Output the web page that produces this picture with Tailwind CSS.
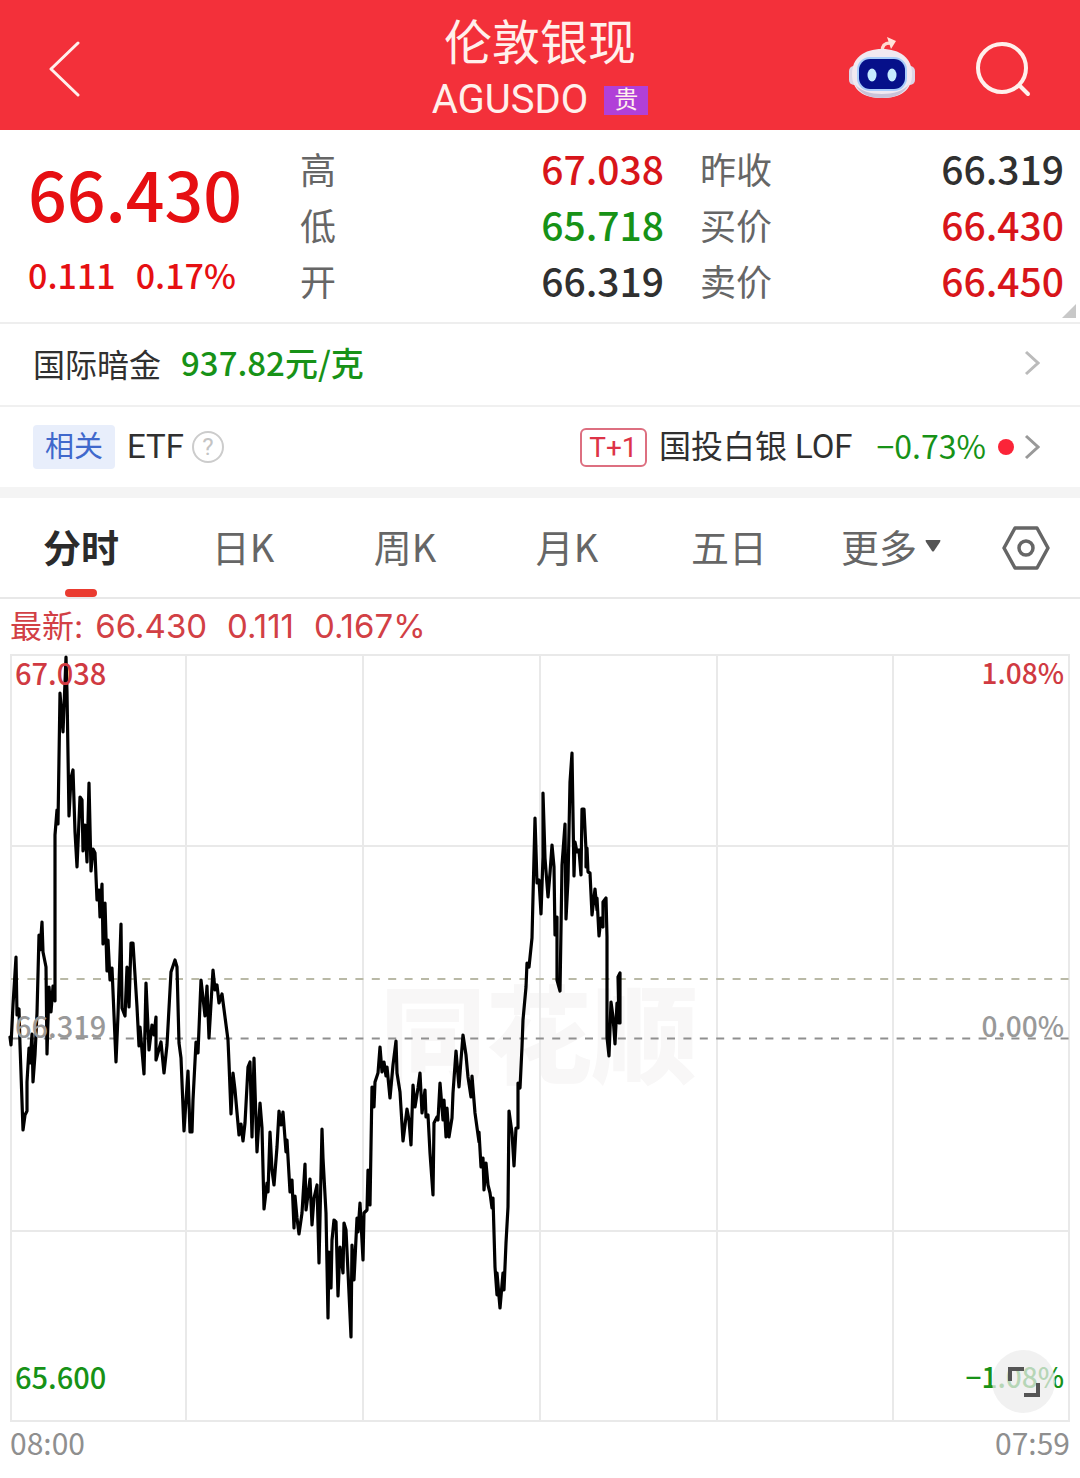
<!DOCTYPE html>
<html lang="zh-CN">
<head>
  <meta charset="UTF-8" />
  <meta name="viewport" content="width=device-width, initial-scale=1.0" />
  <title>伦敦银现 AGUSDO</title>
  <script src="https://cdn.jsdelivr.net/npm/@tailwindcss/browser@4"></script>
</head>

<body class="bg-white text-[#303030] font-['Roboto','Noto_Sans_CJK_SC',sans-serif]">

  <!-- Header -->
  <header class="bg-[#f3303a] text-[#fff0ec] h-[130px] px-12 flex items-center">
    <div class="flex-1 flex">
      <button type="button" aria-label="返回" class="pt-2">
        <svg class="w-8 h-14" viewBox="0 0 32 56" fill="none" stroke="currentColor" stroke-width="3" stroke-linecap="round" stroke-linejoin="round">
          <path d="M30 2 3 28l27 26" />
        </svg>
      </button>
    </div>
    <div class="text-center pt-[14px]">
      <h1 class="text-[48px] leading-[56px]">伦敦银现</h1>
      <div class="flex items-center justify-center gap-4">
        <span class="text-[40px] leading-[56px]">AGUSDO</span>
        <span class="bg-[#b140d8] w-11 h-[29px] text-[24px] leading-[29px]">贵</span>
      </div>
    </div>
    <div class="flex-1 flex justify-end items-center gap-[60px] pt-2">
      <button type="button" aria-label="智能助手">
        <svg class="w-[68px] h-16" viewBox="0 0 68 64" fill="none">
          <path d="M34 15c0-7 3-9 8-9" stroke="#ffd9cf" stroke-width="3.500" />
          <path d="M39 0l9 4-5 8z" fill="#ffe3da" />
          <rect x="1" y="29" width="12" height="19" rx="5" fill="#dcd5e6" />
          <rect x="55" y="29" width="12" height="19" rx="5" fill="#dcd5e6" />
          <path d="M34 12c18 0 30 9 30 25S53 61 34 61 4 53 4 37s12-25 30-25z" fill="#f1e9f1" />
          <path d="M7 47c5 10 14 14 27 14s22-4 27-14c-5 7-16 10-27 10S12 54 7 47z" fill="#c9c3d8" />
          <rect x="9" y="20" width="50" height="34" rx="13" fill="#a9cdfa" />
          <rect x="11" y="22" width="46" height="30" rx="11" fill="#06108a" />
          <ellipse cx="24" cy="38" rx="4.500" ry="6.500" fill="#c5ecff" />
          <ellipse cx="44" cy="38" rx="4.500" ry="6.500" fill="#c5ecff" />
        </svg>
      </button>
      <button type="button" aria-label="搜索">
        <svg class="w-14 h-14" viewBox="0 0 56 56" fill="none" stroke="currentColor" stroke-width="4" stroke-linecap="round">
          <circle cx="26" cy="27" r="24" />
          <path d="M44 45l8 8" />
        </svg>
      </button>
    </div>
  </header>

  <!-- Quote summary -->
  <section class="relative h-[194px] pt-[10px] pl-7 pr-4 flex border-b-2 border-[#eeeeee] font-['Noto_Sans_CJK_SC',sans-serif]">
    <div class="w-[272px] text-[#e60f12] font-medium">
      <p class="text-[68px] leading-[106px]">66.430</p>
      <p class="text-[34px] leading-[58px] flex gap-5"><span>0.111</span><span>0.17%</span></p>
    </div>
    <dl class="w-[364px] grid grid-cols-2 auto-rows-[56px] items-center text-[36px] leading-[56px]">
      <dt class="text-[#666666]">高</dt><dd class="text-right font-medium text-[39px] text-[#d8151a]">67.038</dd>
      <dt class="text-[#666666]">低</dt><dd class="text-right font-medium text-[39px] text-[#179217]">65.718</dd>
      <dt class="text-[#666666]">开</dt><dd class="text-right font-medium text-[39px]">66.319</dd>
    </dl>
    <dl class="flex-1 pl-9 grid grid-cols-2 auto-rows-[56px] items-center text-[36px] leading-[56px]">
      <dt class="text-[#666666]">昨收</dt><dd class="text-right font-medium text-[39px]">66.319</dd>
      <dt class="text-[#666666]">买价</dt><dd class="text-right font-medium text-[39px] text-[#d8151a]">66.430</dd>
      <dt class="text-[#666666]">卖价</dt><dd class="text-right font-medium text-[39px] text-[#d8151a]">66.450</dd>
    </dl>
    <svg class="absolute right-1 bottom-1 w-[14px] h-[14px]" viewBox="0 0 14 14"><path d="M14 0v14H0z" fill="#c8c8c8" /></svg>
  </section>

  <!-- Related instruments -->
  <a href="#gold" class="h-[83px] pl-[33px] pr-10 pb-[3px] flex items-center border-b-2 border-[#f0f0f0] text-[32px] font-['Noto_Sans_CJK_SC',sans-serif]">
    <span>国际暗金</span>
    <span class="ml-5 font-medium text-[33px] text-[#179217]">937.82元/克</span>
    <svg class="ml-auto w-4 h-7" viewBox="0 0 16 28" fill="none" stroke="#bbbbbb" stroke-width="3"><path d="M2 3l12 11L2 25" /></svg>
  </a>
  <div class="h-[80px] pl-[33px] pr-10 flex items-center text-[32px]">
    <span class="bg-[#e8eefb] text-[#4068cc] rounded w-[82px] h-11 text-center text-[29px] leading-[44px]">相关</span>
    <span class="ml-3 text-[33px]">ETF</span>
    <button type="button" aria-label="ETF说明" class="ml-2 w-8 h-8 rounded-full border-2 border-[#cccccc] text-[#c4c4c4] text-[24px] leading-[28px]">?</button>
    <a href="#lof" class="ml-auto flex items-center">
      <span class="w-[67px] h-[39px] border-2 border-[#dd6f80] rounded-md text-center text-[28px] leading-[35px] text-[#dd3347]">T+1</span>
      <span class="ml-3">国投白银</span>
      <span class="ml-2 text-[33px]">LOF</span>
      <span class="ml-6 leading-10 pb-1 text-[#179217] font-['Noto_Sans_CJK_SC']">−0.73%</span>
      <span class="ml-3 w-4 h-4 rounded-full bg-[#fb2438]"></span>
      <svg class="ml-[10px] w-4 h-7" viewBox="0 0 16 28" fill="none" stroke="#999999" stroke-width="3"><path d="M2 3l12 11L2 25" /></svg>
    </a>
  </div>
  <div class="h-[11px] bg-[#f4f4f4]"></div>

  <!-- Period tabs -->
  <nav class="h-[101px] flex border-b-2 border-[#e8e8e8] text-[38px] text-[#666666] font-['Noto_Sans_CJK_SC',sans-serif]">
    <button type="button" class="w-[15%] pb-1 relative font-bold text-[#2b2b2b]">分时<span class="absolute left-1/2 -translate-x-1/2 bottom-0 w-8 h-2 rounded-full bg-[#ea3b30]"></span></button>
    <button type="button" class="w-[15%] pb-1">日K</button>
    <button type="button" class="w-[15%] pb-1">周K</button>
    <button type="button" class="w-[15%] pb-1">月K</button>
    <button type="button" class="w-[15%] pb-1">五日</button>
    <button type="button" class="w-[15%] pb-1 flex items-center justify-center gap-2">更多
      <svg class="w-4 h-3" viewBox="0 0 16 12"><path d="M1 0h14q1 0 0 2L9 11q-1 1-2 0L1 2q-1-2 0-2z" fill="#555555" /></svg>
    </button>
    <button type="button" aria-label="图表设置" class="w-[10%] flex items-center justify-center">
      <svg class="w-12 h-11" viewBox="0 0 48 44" fill="none" stroke="#666666" stroke-width="3.500" stroke-linejoin="round">
        <path d="M13 2h22l11 20-11 20H13L2 22z" />
        <circle cx="24" cy="22" r="7" />
      </svg>
    </button>
  </nav>

  <!-- Latest price -->
  <p class="h-[55px] pl-[10px] flex items-center text-[33px] text-[#d24045] font-['Inter','Noto_Sans_CJK_SC',sans-serif]">
    <span class="text-[32px]">最新:</span>
    <span class="ml-3">66.430</span>
    <span class="ml-5">0.111</span>
    <span class="ml-5">0.167%</span>
  </p>

  <!-- Intraday chart -->
  <main class="relative font-['Noto_Sans_CJK_SC',sans-serif] font-medium text-[29px] leading-9">
    <svg class="block w-full" viewBox="0 654 1080 768" fill="none" role="img" aria-label="分时走势">
      <text x="380" y="1075" font-size="106" font-weight="900" fill="#f8f7f7">同花顺</text>
      <path d="M11 655H1069V1421H11zM186 655V1421M363 655V1421M540 655V1421M717 655V1421M893 655V1421M11 846H1069M11 1231H1069" stroke="#e9e9e9" stroke-width="2" />
      <path d="M11 979H1069" stroke="#b9b9a6" stroke-width="2" stroke-dasharray="8 8.400" />
      <path d="M11 1038.500H1069" stroke="#8f8f8f" stroke-width="2" stroke-dasharray="8 8.400" />
      <path stroke="#000000" stroke-width="3.200" stroke-linejoin="round" stroke-linecap="round" d="M10 1037 11 1045 13 1005 16 957 17 1015 19 1009 20 1045 23 1130 25 1115 27 1111 27 1082 29 1048 30 1063 32 1034 33 1082 35 1055 37 1013 39 935 40 950 42 922 43 952 46 967 47 1054 49 987 51 1012 53 986 55 1001 55 835 57 810 58 824 60 693 63 732 66 657 67 692 69 816 71 778 73 770 75 832 77 867 80 797 82 800 83 851 85 825 87 862 89 783 91 871 93 849 95 853 97 900 99 890 100 917 102 884 103 944 105 903 107 971 108 940 110 980 112 968 116 1062 118 1015 121 924 122 1008 125 1016 127 967 129 1007 131 943 133 943 135 975 137 1007 139 1046 140 1027 144 1074 146 983 149 1050 152 1025 154 1035 156 1017 156 1060 161 1042 164 1073 167 1045 170 990 171 972 175 960 177 967 179 1043 181 1058 184 1131 188 1071 190 1132 192 1132 193 1100 196 1042 198 1053 201 980 205 1016 207 986 209 1038 213 970 215 990 217 985 219 1003 222 994 225 1017 228 1040 229 1063 231 1114 233 1073 235 1090 239 1135 241 1124 243 1141 245 1123 248 1067 250 1062 252 1137 254 1058 257 1152 260 1103 262 1128 264 1209 267 1183 268 1192 270 1132 272 1170 274 1185 277 1147 279 1111 281 1125 283 1112 286 1152 287 1140 290 1192 292 1180 294 1228 295 1196 297 1218 299 1234 302 1213 305 1164 306 1210 310 1179 312 1225 314 1198 317 1185 319 1263 322 1129 323 1158 326 1213 328 1318 329 1252 331 1288 332 1240 334 1220 336 1222 338 1296 340 1247 343 1273 344 1223 346 1230 349 1293 351 1337 352 1245 354 1280 357 1218 358 1232 360 1203 363 1260 364 1213 367 1210 368 1170 370 1205 372 1087 374 1107 375 1082 378 1073 380 1047 382 1072 384 1062 386 1076 387 1067 390 1098 393 1065 396 1041 397 1073 400 1092 403 1141 407 1109 409 1120 411 1145 413 1085 415 1107 418 1088 420 1073 422 1113 425 1090 426 1117 428 1115 430 1153 433 1195 434 1123 437 1117 438 1120 440 1083 443 1120 444 1100 446 1137 447 1108 449 1137 452 1118 453 1093 456 1051 459 1087 461 1060 463 1035 466 1055 468 1077 471 1097 472 1076 475 1113 479 1142 479 1132 481 1167 483 1158 484 1190 486 1163 488 1185 490 1193 492 1208 493 1198 495 1267 497 1295 497 1273 500 1308 503 1273 504 1290 506 1243 508 1207 509 1111 512 1133 514 1166 516 1128 518 1128 518 1083 520 1088 522 1047 523 1020 526 987 527 963 529 967 532 938 533 897 535 818 537 883 539 880 541 914 543 857 543 793 545 858 548 897 550 873 552 845 554 867 555 935 557 917 557 980 560 991 561 930 562 865 565 824 566 919 568 880 570 782 572 753 574 876 575 842 577 852 579 850 581 875 582 809 584 809 586 850 586 867 587 848 588 872 590 873 592 915 595 889 597 910 597 898 599 936 601 918 603 927 603 902 606 898 607 937 607 1037 609 1056 611 1002 613 1017 615 1044 617 1003 619 1023 618 977 620 973 620 1023" />
    </svg>
    <span class="absolute left-[15px] top-0 text-[#d03a42]">67.038</span>
    <span class="absolute right-4 top-0 text-[28px] text-[#d03a42]">1.08%</span>
    <span class="absolute left-[15px] top-[46%] text-[#999999]">66.319</span>
    <span class="absolute right-4 top-[46%] text-[28px] text-[#999999]">0.00%</span>
    <span class="absolute left-[15px] bottom-7 text-[#179217]">65.600</span>
    <span class="absolute right-4 bottom-7 text-[28px] text-[#179217]">−1.08%</span>
    <button type="button" aria-label="全屏" class="absolute right-[25px] bottom-[9px] w-[63px] h-[63px] rounded-full bg-[#ececec]/75 flex items-center justify-center">
      <svg class="w-8 h-8" viewBox="0 0 32 32" fill="none" stroke="#555555" stroke-width="4"><path d="M2 15V3h14M30 17v12H16" /></svg>
    </button>
  </main>
  <div class="px-[10px] flex justify-between font-['Noto_Sans_CJK_SC',sans-serif] text-[30px] leading-10 text-[#8f8f8f]">
    <span>08:00</span><span>07:59</span>
  </div>

</body>
</html>
